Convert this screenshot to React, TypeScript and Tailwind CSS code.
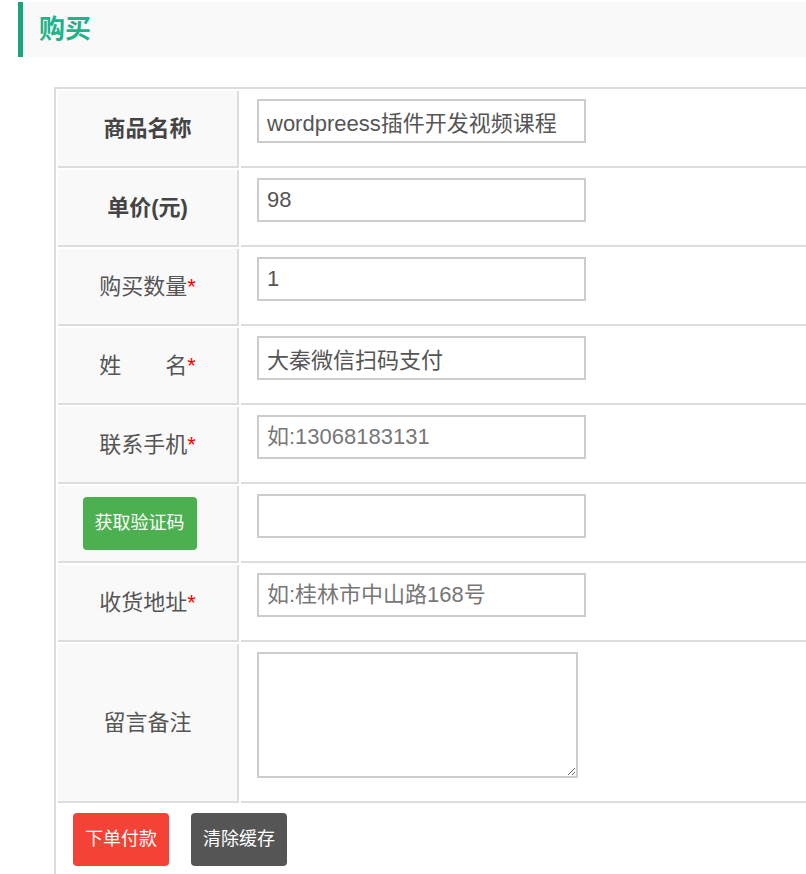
import React from "react";

const font = { fontFamily: '"Liberation Sans", "Noto Sans CJK SC", sans-serif' };

type Row = {
  label: string;
  bold?: boolean;
  required?: boolean;
  value?: string;
  placeholder?: string;
};

const rows: Row[] = [
  { label: "商品名称", bold: true, value: "wordpreess插件开发视频课程" },
  { label: "单价(元)", bold: true, value: "98" },
  { label: "购买数量", required: true, value: "1" },
  { label: "姓\u3000\u3000名", required: true, value: "大秦微信扫码支付" },
  { label: "联系手机", required: true, placeholder: "如:13068183131" },
];

function Label({ row }: { row: Row }) {
  return (
    <span className={row.bold ? "font-bold text-[#444]" : "text-[#555]"}>
      {row.label}
      {row.required && <span className="text-[#f00]">*</span>}
    </span>
  );
}

function TextInput({ value, placeholder }: { value?: string; placeholder?: string }) {
  return (
    <input
      type="text"
      defaultValue={value}
      placeholder={placeholder}
      style={font}
      className="h-[44px] w-[329px] border-2 border-[#ccc] bg-white px-[8px] text-[22px] text-[#555] outline-none placeholder:text-[#777]"
    />
  );
}

const labelCell =
  "h-[77px] w-[181px] border-r-2 border-b-2 border-[#ddd] bg-[#f9f9f9] text-center align-middle text-[22px]";
const valueCell = "border-b-2 border-[#ddd] pl-[16px] pt-[8px] align-top";

export default function App() {
  return (
    <div style={font} className="h-[874px] w-full overflow-hidden bg-white">
      {/* Heading */}
      <div className="ml-[18px] mt-[2px] flex h-[55px] items-center border-l-[5px] border-[#17a57e] bg-[#f9f9f9] pl-[16px]">
        <h2 className="text-[26px] font-bold text-[#22b28a]">购买</h2>
      </div>

      <table className="ml-[54px] mt-[30px] w-[800px] border-separate border-spacing-[2px] border-t-2 border-l-2 border-[#ddd]">
        <tbody>
          {rows.map((row) => (
            <tr key={row.label}>
              <td className={labelCell}>
                <Label row={row} />
              </td>
              <td className={valueCell}>
                <TextInput value={row.value} placeholder={row.placeholder} />
              </td>
            </tr>
          ))}

          <tr>
            <td className={labelCell}>
              <button className="mr-[16px] h-[53px] w-[114px] rounded-[4px] bg-[#4caf50] text-[18px] text-white">
                获取验证码
              </button>
            </td>
            <td className={valueCell}>
              <TextInput />
            </td>
          </tr>

          <tr>
            <td className={labelCell}>
              <Label row={{ label: "收货地址", required: true }} />
            </td>
            <td className={valueCell}>
              <TextInput placeholder="如:桂林市中山路168号" />
            </td>
          </tr>

          <tr>
            <td className="h-[159px] w-[181px] border-r-2 border-b-2 border-[#ddd] bg-[#f9f9f9] text-center align-middle text-[22px] text-[#555]">
              留言备注
            </td>
            <td className={valueCell}>
              <textarea className="block h-[126px] w-[321px] border-2 border-[#ccc] bg-white outline-none" />
            </td>
          </tr>

          <tr>
            <td colSpan={2} className="h-[80px] pl-[15px] pt-[8px] align-top">
              <div className="flex gap-[22px]">
                <button className="h-[53px] w-[96px] rounded-[4px] bg-[#f44336] text-[18px] text-white">
                  下单付款
                </button>
                <button className="h-[53px] w-[96px] rounded-[4px] bg-[#555] text-[18px] text-white">
                  清除缓存
                </button>
              </div>
            </td>
          </tr>
        </tbody>
      </table>
    </div>
  );
}
